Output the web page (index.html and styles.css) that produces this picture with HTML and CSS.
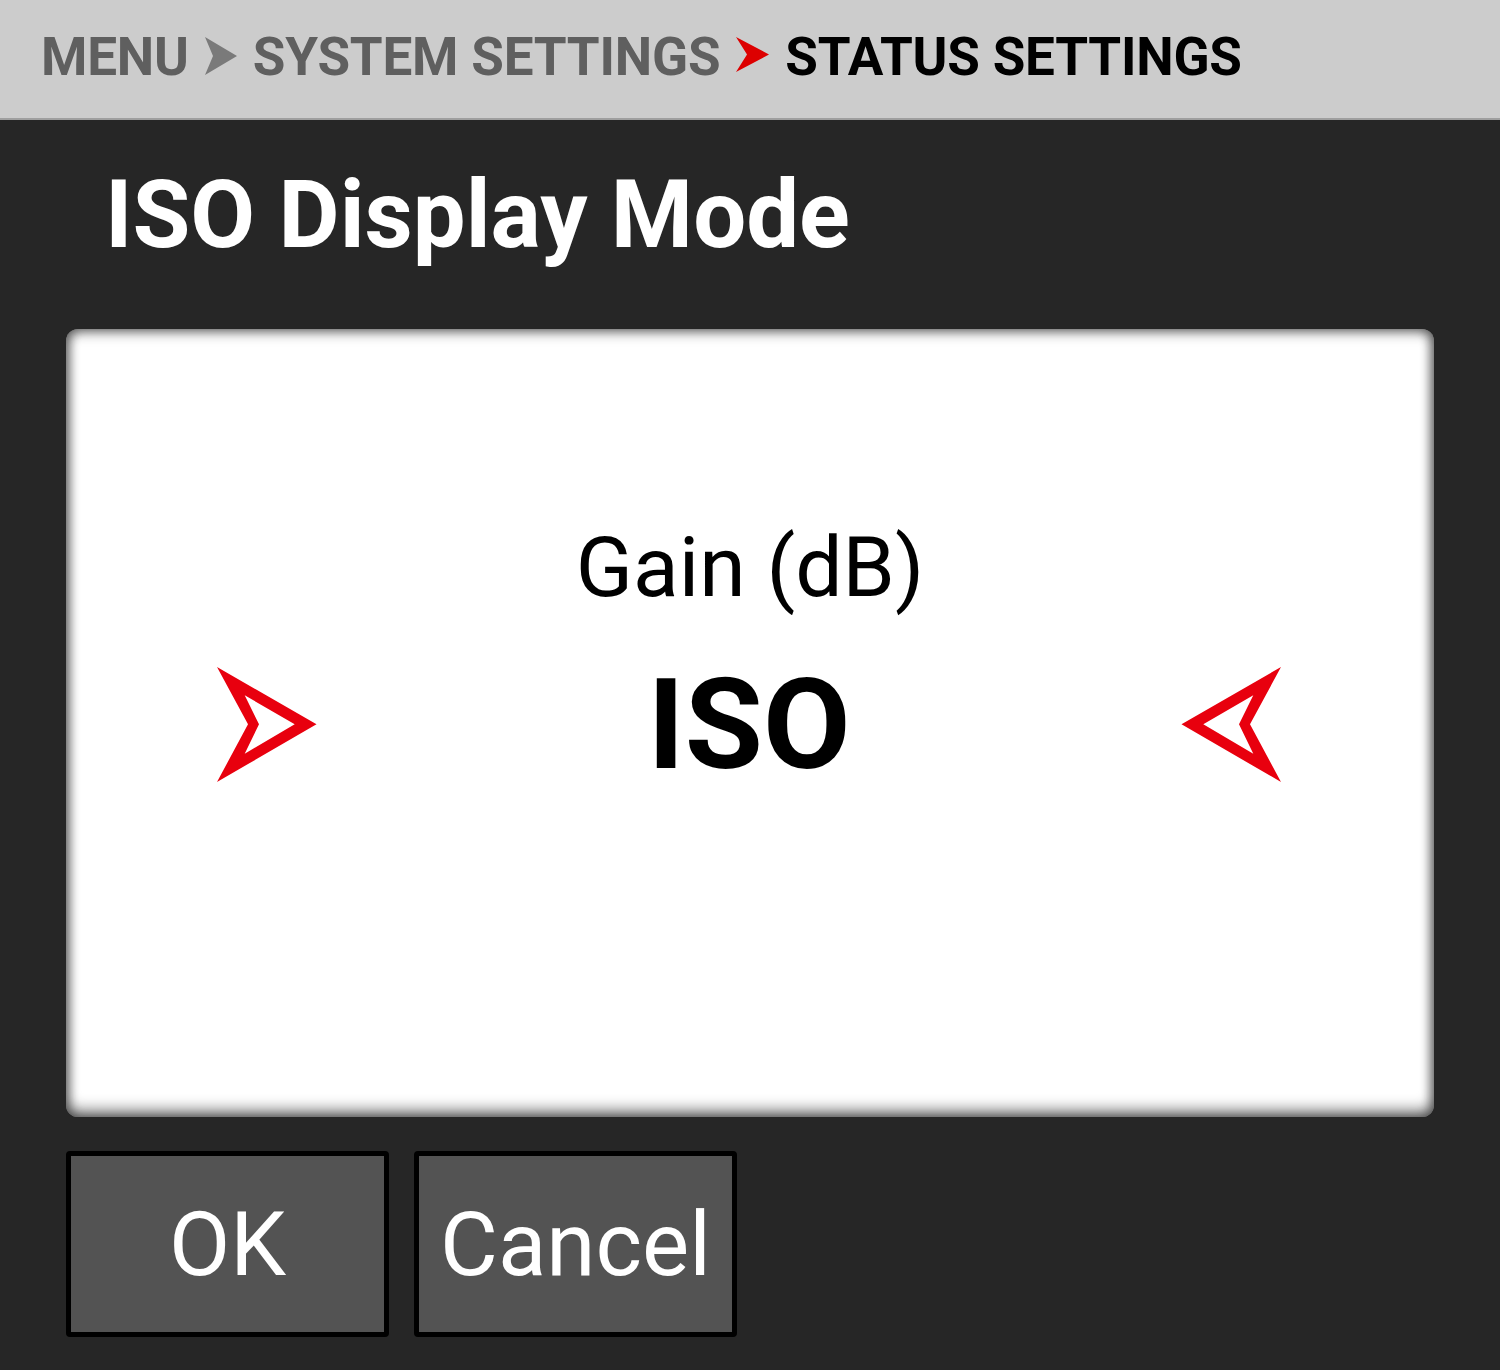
FILE: index.html
```html
<!DOCTYPE html>
<html>
<head>
<meta charset="utf-8">
<link rel="stylesheet" href="styles.css">
</head>
<body>
<header class="crumbs">
  <span class="crumb">MENU</span>
  <svg class="sep" width="32" height="38" viewBox="0 0 32 38"><polygon points="0,0 32,19 0,38 8,19" fill="#7a7a7a"/></svg>
  <span class="crumb">SYSTEM SETTINGS</span>
  <svg class="sep" width="33" height="35" viewBox="0 0 33 35"><polygon points="0,0 33,17.5 0,35 11,17.5" fill="#dd0000"/></svg>
  <span class="crumb current">STATUS SETTINGS</span>
</header>
<main class="content">
  <h1 class="title">ISO Display Mode</h1>
  <section class="panel">
    <div class="label">Gain (dB)</div>
    <div class="row">
      <svg class="arrow" width="102" height="120" viewBox="0 0 102 120"><path fill-rule="evenodd" fill="#e8000e" d="M1 2 L100.5 59.3 L1 117 L32 59.3 Z M28.7 30.3 L43 59.3 L28.7 88.7 L78.7 59.3 Z"/></svg>
      <div class="value">ISO</div>
      <svg class="arrow flip" width="102" height="120" viewBox="0 0 102 120"><path fill-rule="evenodd" fill="#e8000e" d="M1 2 L100.5 59.3 L1 117 L32 59.3 Z M28.7 30.3 L43 59.3 L28.7 88.7 L78.7 59.3 Z"/></svg>
    </div>
  </section>
  <div class="buttons">
    <button class="btn">OK</button>
    <button class="btn">Cancel</button>
  </div>
</main>
</body>
</html>
```

FILE: styles.css
```css
html, body {
  margin: 0;
  padding: 0;
}
body {
  background: #262626;
  font-family: Roboto, "Liberation Sans", sans-serif;
  width: 1500px;
  height: 1370px;
  overflow: hidden;
}
.crumbs {
  box-sizing: border-box;
  height: 120px;
  background: #cccccc;
  border-bottom: 2px solid #9e9e9e;
  display: flex;
  align-items: flex-start;
  padding: 26px 0 0 41px;
  gap: 16px;
}
.crumb {
  font-size: 53px;
  font-weight: 700;
  line-height: 62px;
  color: #5f5f5f;
  white-space: nowrap;
  letter-spacing: -0.2px;
}
.crumb.current {
  color: #000;
}
.sep {
  display: block;
  margin-top: 11px;
}
.content {
  padding: 0 66px;
}
.title {
  margin: 37px 0 0 39px;
  font-size: 94px;
  line-height: 116px;
  font-weight: 700;
  color: #fff;
}
.panel {
  box-sizing: border-box;
  margin-top: 56px;
  height: 788px;
  background: #fff;
  border-radius: 12px;
  padding-top: 189px;
  box-shadow:
    inset 0 -8px 14px rgba(0,0,0,0.45),
    inset 0 5px 12px rgba(0,0,0,0.35),
    inset 5px 0 10px rgba(0,0,0,0.22),
    inset -5px 0 10px rgba(0,0,0,0.22);
}
.label {
  text-align: center;
  font-size: 84px;
  line-height: 100px;
  color: #000;
}
.row {
  margin-top: 42px;
  display: flex;
  align-items: center;
  justify-content: space-between;
  padding: 0 152px 0 150px;
  height: 130px;
}
.arrow {
  display: block;
}
.flip {
  transform: scaleX(-1);
}
.value {
  font-size: 127px;
  font-weight: 700;
  line-height: 130px;
  color: #000;
}
.buttons {
  margin-top: 34px;
  display: flex;
  gap: 25px;
}
.btn {
  box-sizing: border-box;
  width: 323px;
  height: 186px;
  background: #535353;
  border: 5px solid #000;
  border-radius: 4px;
  color: #fff;
  font-family: Roboto, "Liberation Sans", sans-serif;
  font-size: 89px;
  font-weight: 400;
  padding: 0;
  display: flex;
  align-items: center;
  justify-content: center;
}
```
